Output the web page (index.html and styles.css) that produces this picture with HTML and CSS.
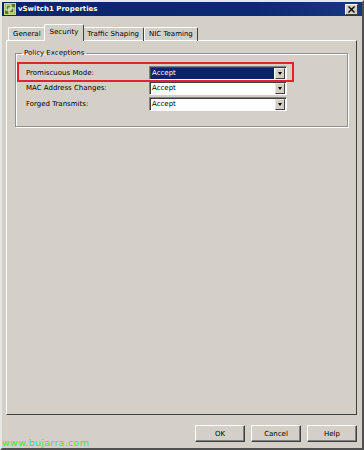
FILE: index.html
```html
<!DOCTYPE html>
<html lang="en">
<head>
    <meta charset="UTF-8">
    <title>vSwitch1 Properties</title>
    <link rel="stylesheet" href="styles.css">
</head>
<body>
    <div class="window">
        <div class="titlebar">
            <svg class="app-icon" width="12" height="12" viewBox="0 0 12 12">
                <rect x="0.5" y="0.5" width="11" height="11" fill="#5a7a2a" stroke="#c8d890"/>
                <rect x="2" y="2" width="5" height="5" fill="none" stroke="#e8f0c0" stroke-width="1.2"/>
                <rect x="5" y="5" width="5" height="5" fill="none" stroke="#e8f0c0" stroke-width="1.2"/>
            </svg>
            <span class="title">vSwitch1 Properties</span>
            <span class="close">
                <svg width="7" height="7" viewBox="0 0 7 7"><path d="M0.5 0.5 L6.5 6.5 M6.5 0.5 L0.5 6.5" stroke="#000" stroke-width="1.4"/></svg>
            </span>
        </div>

        <div class="tabs">
            <div class="tab">General</div>
            <div class="tab active">Security</div>
            <div class="tab">Traffic Shaping</div>
            <div class="tab">NIC Teaming</div>
        </div>

        <div class="panel">
            <fieldset class="group">
                <legend>Policy Exceptions</legend>
                <div class="highlight"></div>
                <div class="row">
                    <label>Promiscuous Mode:</label>
                    <div class="combo selected"><span class="value">Accept</span><span class="arrow"></span></div>
                </div>
                <div class="row">
                    <label>MAC Address Changes:</label>
                    <div class="combo"><span class="value">Accept</span><span class="arrow"></span></div>
                </div>
                <div class="row">
                    <label>Forged Transmits:</label>
                    <div class="combo"><span class="value">Accept</span><span class="arrow"></span></div>
                </div>
            </fieldset>
        </div>

        <div class="buttons">
            <button>OK</button>
            <button>Cancel</button>
            <button>Help</button>
        </div>

        <div class="watermark">www.bujarra.com</div>
    </div>
</body>
</html>
```
FILE: styles.css
```css
body {
    margin: 0;
    padding: 0;
    font-family: 'DejaVu Sans', sans-serif;
    font-size: 7px;
    color: #000;
    background-color: #d4d0c8;
}

.window {
    position: relative;
    width: 364px;
    height: 450px;
    box-sizing: border-box;
    background-color: #d4d0c8;
    border: 2px solid;
    border-color: #e8e6e0 #505050 #505050 #e8e6e0;
    display: flex;
    flex-direction: column;
}

.titlebar {
    height: 14px;
    background: linear-gradient(to right, #0a246a, #0c2a72 70%, #17377e);
    display: flex;
    align-items: center;
    padding: 0 4px 0 2px;
}

.app-icon {
    margin-right: 2px;
}

.title {
    flex: 1;
    color: white;
    font-weight: bold;
    font-size: 7px;
}

.close {
    width: 11px;
    height: 9px;
    background-color: #d4d0c8;
    border: 1px solid;
    border-color: #fff #404040 #404040 #fff;
    display: flex;
    justify-content: center;
    align-items: center;
}

.tabs {
    display: flex;
    align-items: flex-end;
    height: 16px;
    margin-top: 8px;
    padding-left: 6px;
}

.tab {
    height: 13px;
    line-height: 13px;
    padding: 0 4px;
    border: 1px solid;
    border-bottom: none;
    border-color: #fff #404040 #fff #fff;
    border-radius: 2px 2px 0 0;
    position: relative;
    top: 1px;
}

.tab.active {
    height: 16px;
    line-height: 14px;
    padding: 0 5px;
    margin: 0 -2px;
    background-color: #d4d0c8;
    z-index: 1;
}

.panel {
    flex: none;
    height: 375px;
    box-sizing: border-box;
    margin: 0 5px 0 4px;
    border: 1px solid;
    border-color: #fff #404040 #404040 #fff;
    padding: 8px 8px 0 8px;
}

.group {
    position: relative;
    margin: 0;
    padding: 8px 0 14px 10px;
    border: 1px solid #909090;
    box-shadow: 1px 1px 0 #fff, inset 1px 1px 0 #fff;
}

.group legend {
    padding: 0 2px;
    margin-left: -4px;
}

.highlight {
    position: absolute;
    left: 1px;
    top: 5px;
    width: 273px;
    height: 16px;
    border: 2px solid #e02528;
}

.row {
    display: flex;
    align-items: center;
    height: 15.5px;
}

.row label {
    width: 123px;
}

.combo {
    width: 134px;
    height: 11px;
    background-color: #fff;
    border: 1px solid;
    border-color: #808080 #fff #fff #808080;
    box-shadow: inset 1px 1px 0 #404040;
    display: flex;
    align-items: stretch;
    padding: 1px 1px 0 1px;
}

.combo .value {
    flex: 1;
    line-height: 10px;
    padding-left: 1px;
}

.combo.selected .value {
    background-color: #0a246a;
    color: white;
    margin-right: 1px;
}

.combo .arrow {
    width: 8px;
    background-color: #d4d0c8;
    border: 1px solid;
    border-color: #e8e6e0 #404040 #404040 #e8e6e0;
    position: relative;
}

.combo .arrow::after {
    content: "";
    position: absolute;
    left: 2px;
    top: 3px;
    border-left: 2px solid transparent;
    border-right: 2px solid transparent;
    border-top: 3px solid #000;
}

.buttons {
    display: flex;
    justify-content: flex-end;
    gap: 6px;
    padding: 10px 5px 0 0;
}

button {
    width: 50px;
    height: 17px;
    font-family: 'DejaVu Sans', sans-serif;
    font-size: 7px;
    background-color: #d4d0c8;
    border: 1px solid;
    border-color: #fff #404040 #404040 #fff;
    box-shadow: inset -1px -1px 0 #808080;
    padding: 0;
}

.watermark {
    position: absolute;
    left: 0;
    bottom: 0;
    color: #3fe43f;
    font-family: 'DejaVu Sans', sans-serif;
    font-size: 9.5px;
    letter-spacing: 0.3px;
}
```
